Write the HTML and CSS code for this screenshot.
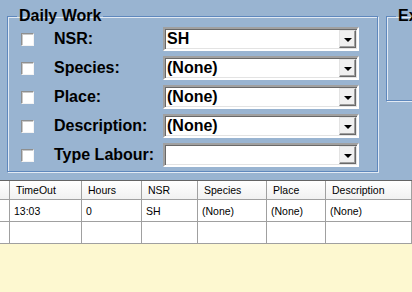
FILE: index.html
```html
<!DOCTYPE html>
<html lang="en">

<head>
    <title>Daily Work</title>
    <meta charset="UTF-8">
    <meta name="viewport" content="width=device-width, initial-scale=1">
    <link rel="stylesheet" href="styles.css">
</head>

<body>
    <div class="top">
        <div class="edge"></div>

        <!-- filter criteria -->
        <fieldset class="group daily">
            <legend>Daily Work</legend>
            <div class="row">
                <span class="check"></span>
                <span class="label">NSR:</span>
                <div class="combo"><span class="value">SH</span><span class="drop"></span></div>
            </div>
            <div class="row">
                <span class="check"></span>
                <span class="label">Species:</span>
                <div class="combo"><span class="value">(None)</span><span class="drop"></span></div>
            </div>
            <div class="row">
                <span class="check"></span>
                <span class="label">Place:</span>
                <div class="combo"><span class="value">(None)</span><span class="drop"></span></div>
            </div>
            <div class="row">
                <span class="check"></span>
                <span class="label">Description:</span>
                <div class="combo"><span class="value">(None)</span><span class="drop"></span></div>
            </div>
            <div class="row">
                <span class="check"></span>
                <span class="label">Type Labour:</span>
                <div class="combo"><span class="value"></span><span class="drop"></span></div>
            </div>
        </fieldset>

        <fieldset class="group extra">
            <legend>Ex</legend>
        </fieldset>
    </div>

    <div class="grid">
        <div class="grid-row head">
            <div class="cell c0"></div>
            <div class="cell c1">TimeOut</div>
            <div class="cell c2">Hours</div>
            <div class="cell c3">NSR</div>
            <div class="cell c4">Species</div>
            <div class="cell c5">Place</div>
            <div class="cell c6">Description</div>
            <div class="cell c7"></div>
        </div>
        <div class="grid-row">
            <div class="cell c0"></div>
            <div class="cell c1">13:03</div>
            <div class="cell c2">0</div>
            <div class="cell c3">SH</div>
            <div class="cell c4">(None)</div>
            <div class="cell c5">(None)</div>
            <div class="cell c6">(None)</div>
            <div class="cell c7"></div>
        </div>
        <div class="grid-row">
            <div class="cell c0"></div>
            <div class="cell c1"></div>
            <div class="cell c2"></div>
            <div class="cell c3"></div>
            <div class="cell c4"></div>
            <div class="cell c5"></div>
            <div class="cell c6"></div>
            <div class="cell c7"></div>
        </div>
    </div>

    <div class="empty"></div>
</body>

</html>
```

FILE: styles.css
```css
* {
    margin: 0px;
    padding: 0px;
    box-sizing: border-box;
}

html,
body {
    width: 412px;
    height: 292px;
    overflow: hidden;
}

body {
    display: flex;
    flex-direction: column;
    background: #fdf8d0;
    font-family: "Liberation Sans", Arial, sans-serif;
    color: #000;
}

.top {
    display: flex;
    align-items: flex-start;
    height: 180px;
    flex: none;
    padding-top: 7px;
    background: #99b4d1;
    overflow: hidden;
}

.edge {
    width: 1px;
    align-self: stretch;
    margin-top: 6px;
    background: #d3dfec;
}

.group {
    border: 1px solid #5f88bd;
    box-shadow: inset 1px 1px 0 #e2eaf4, 1px 1px 0 #e2eaf4;
    padding: 0;
    margin: 0;
    flex: none;
}

.group legend {
    font-size: 16px;
    font-weight: bold;
    line-height: 18px;
    padding: 0 2px;
    margin-left: 9px;
}

.daily {
    margin-left: 7px;
    width: 371px;
    padding: 2px 0 4px 0;
    display: flex;
    flex-direction: column;
    gap: 5px;
}

.extra {
    margin-left: 8px;
    width: 80px;
    height: 94px;
}

.row {
    display: flex;
    align-items: center;
    height: 24px;
}

.check {
    width: 13px;
    height: 13px;
    margin-left: 13px;
    background: #fff;
    border: 1px solid;
    border-color: #8e8f8f #f4f4f4 #f4f4f4 #8e8f8f;
    box-shadow: inset 1px 1px 0 #c9c9c9;
}

.label {
    width: 109px;
    margin-left: 20px;
    font-size: 16px;
    font-weight: bold;
}

.combo {
    width: 196px;
    height: 24px;
    display: flex;
    align-items: center;
    background: #fff;
    border: 2px solid;
    border-color: #a0a0a0 #ffffff #ffffff #a0a0a0;
    box-shadow: inset 1px 1px 0 #696969, inset -1px -1px 0 #e3e3e3;
}

.value {
    flex: 1;
    padding-left: 2px;
    font-size: 16px;
    font-weight: bold;
}

.drop {
    width: 17px;
    height: 18px;
    margin-right: 1px;
    display: flex;
    align-items: center;
    justify-content: center;
    background: #f0f0f0;
    border: 1px solid;
    border-color: #e3e3e3 #696969 #696969 #e3e3e3;
    box-shadow: inset -1px -1px 0 #a0a0a0;
}

.drop::after {
    content: "";
    border-left: 4px solid transparent;
    border-right: 4px solid transparent;
    border-top: 4px solid #000;
    margin-top: 1px;
}

.grid {
    flex: none;
    background: #fff;
    border-top: 1px solid #646464;
    font-size: 10.5px;
}

.grid-row {
    display: flex;
    height: 22px;
    border-bottom: 1px solid #a0a0a0;
}

.grid-row.head {
    height: 19px;
    background: linear-gradient(#ffffff, #f1f1f1);
}

.cell {
    flex: none;
    display: flex;
    align-items: center;
    padding-left: 4px;
    border-right: 1px solid #a0a0a0;
    white-space: nowrap;
}

.head .cell {
    padding-left: 6px;
}

.c0 { width: 10px; }
.c1 { width: 72px; }
.c2 { width: 60px; }
.c3 { width: 56px; }
.c4 { width: 69px; }
.c5 { width: 59px; }
.c6 { width: 86px; }
.c7 { width: 40px; }

.empty {
    flex: 1;
}
```
